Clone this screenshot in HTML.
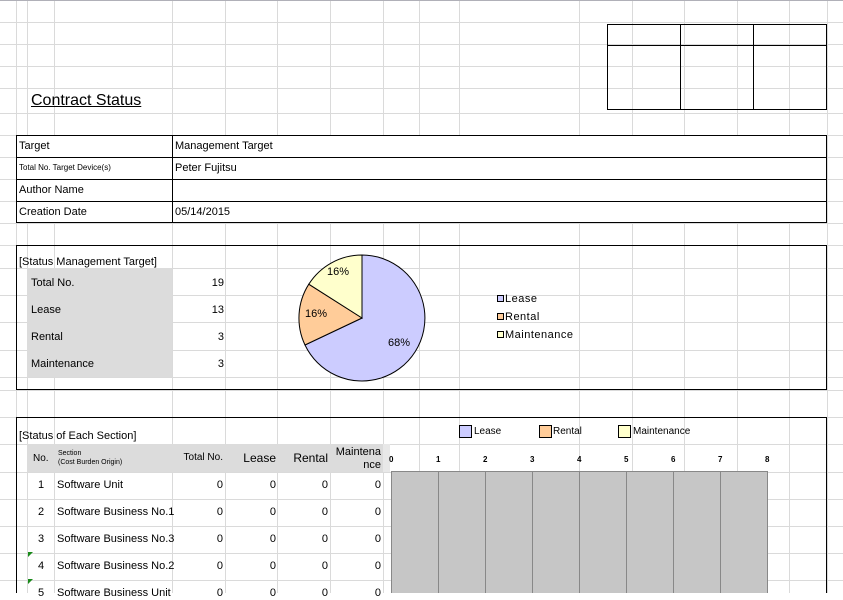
<!DOCTYPE html>
<html><head><meta charset="utf-8"><style>
body{margin:0;width:843px;height:593px;overflow:hidden;background:#fff;font-family:"Liberation Sans",sans-serif;font-size:11px;color:#000;position:relative}
.t{position:absolute;white-space:nowrap;line-height:14px}
.r{text-align:right}
svg{position:absolute;left:0;top:0}
</style></head><body>
<svg width="843" height="593">
<g stroke="#dadada" stroke-width="1">
<line x1="16.5" y1="0" x2="16.5" y2="593"/><line x1="27.5" y1="0" x2="27.5" y2="593"/><line x1="54.5" y1="0" x2="54.5" y2="593"/>
<line x1="172.5" y1="0" x2="172.5" y2="593"/><line x1="225.5" y1="0" x2="225.5" y2="593"/><line x1="277.5" y1="0" x2="277.5" y2="593"/>
<line x1="330.5" y1="0" x2="330.5" y2="593"/><line x1="383.5" y1="0" x2="383.5" y2="593"/><line x1="419.5" y1="0" x2="419.5" y2="593"/>
<line x1="459.5" y1="0" x2="459.5" y2="593"/><line x1="579.5" y1="0" x2="579.5" y2="593"/><line x1="632.5" y1="0" x2="632.5" y2="593"/>
<line x1="684.5" y1="0" x2="684.5" y2="593"/><line x1="737.5" y1="0" x2="737.5" y2="593"/><line x1="789.5" y1="0" x2="789.5" y2="593"/>
<line x1="827.5" y1="0" x2="827.5" y2="593"/>
<line x1="0" y1="22.5" x2="843" y2="22.5"/><line x1="0" y1="44.5" x2="843" y2="44.5"/><line x1="0" y1="66.5" x2="843" y2="66.5"/>
<line x1="0" y1="88.5" x2="843" y2="88.5"/><line x1="0" y1="113.5" x2="843" y2="113.5"/><line x1="0" y1="135.5" x2="843" y2="135.5"/>
<line x1="0" y1="157.5" x2="843" y2="157.5"/><line x1="0" y1="179.5" x2="843" y2="179.5"/><line x1="0" y1="201.5" x2="843" y2="201.5"/>
<line x1="0" y1="223.5" x2="843" y2="223.5"/><line x1="0" y1="245.5" x2="843" y2="245.5"/><line x1="0" y1="268.5" x2="843" y2="268.5"/>
<line x1="0" y1="295.5" x2="843" y2="295.5"/><line x1="0" y1="322.5" x2="843" y2="322.5"/><line x1="0" y1="350.5" x2="843" y2="350.5"/>
<line x1="0" y1="377.5" x2="843" y2="377.5"/><line x1="0" y1="390.5" x2="843" y2="390.5"/><line x1="0" y1="417.5" x2="843" y2="417.5"/>
<line x1="0" y1="444.5" x2="843" y2="444.5"/><line x1="0" y1="472.5" x2="843" y2="472.5"/><line x1="0" y1="499.5" x2="843" y2="499.5"/>
<line x1="0" y1="526.5" x2="843" y2="526.5"/><line x1="0" y1="553.5" x2="843" y2="553.5"/><line x1="0" y1="580.5" x2="843" y2="580.5"/>
</g>
<line x1="0" y1="0.5" x2="843" y2="0.5" stroke="#b0b0b8"/>
<rect x="27" y="268" width="145" height="109" fill="#dcdcdc"/>
<rect x="27" y="444" width="356" height="28" fill="#dcdcdc"/>
<rect x="383" y="444" width="7" height="28" fill="#e8e8e8"/>
<g stroke="#000" stroke-width="1" fill="none">
<rect x="607.5" y="24.5" width="219" height="85"/>
<line x1="607" y1="45.5" x2="827" y2="45.5"/><line x1="680.5" y1="24" x2="680.5" y2="110"/><line x1="753.5" y1="24" x2="753.5" y2="110"/>
<rect x="16.5" y="135.5" width="810" height="87" fill="#fff"/>
<line x1="172.5" y1="135" x2="172.5" y2="223"/>
<line x1="16" y1="157.5" x2="827" y2="157.5"/><line x1="16" y1="179.5" x2="827" y2="179.5"/><line x1="16" y1="201.5" x2="827" y2="201.5"/>
<rect x="16.5" y="245.5" width="810" height="144"/>
<path d="M16.5 600 V417.5 H826.5 V600"/>
</g>
<g stroke="#000" stroke-width="1">
<path d="M362 318 L362 255 A63 63 0 1 1 305 345 Z" fill="#ccccff"/>
<path d="M362 318 L305 345 A63 63 0 0 1 308.8 284.2 Z" fill="#ffcc99"/>
<path d="M362 318 L308.8 284.2 A63 63 0 0 1 362 255 Z" fill="#ffffcc"/>
</g>
<g stroke="#000" stroke-width="1">
<rect x="497.5" y="295.5" width="6" height="6" fill="#ccccff"/>
<rect x="497.5" y="313.5" width="6" height="6" fill="#ffcc99"/>
<rect x="497.5" y="331.5" width="6" height="6" fill="#ffffcc"/>
<rect x="459.5" y="425.5" width="12" height="12" fill="#ccccff"/>
<rect x="539.5" y="425.5" width="12" height="12" fill="#ffcc99"/>
<rect x="618.5" y="425.5" width="12" height="12" fill="#ffffcc"/>
</g>
<rect x="391.5" y="471.5" width="376" height="130" fill="#c6c6c6" stroke="#888"/>
<g stroke="#888"><line x1="438.5" y1="471" x2="438.5" y2="593"/><line x1="485.5" y1="471" x2="485.5" y2="593"/><line x1="532.5" y1="471" x2="532.5" y2="593"/><line x1="579.5" y1="471" x2="579.5" y2="593"/><line x1="626.5" y1="471" x2="626.5" y2="593"/><line x1="673.5" y1="471" x2="673.5" y2="593"/><line x1="720.5" y1="471" x2="720.5" y2="593"/></g>
<path d="M28 552 h5 l-5 5z M28 579 h5 l-5 5z" fill="#1a8a1a"/>
</svg>
<div class="t" style="left:31px;top:92px;font-size:16px;line-height:18px;text-decoration:underline">Contract Status</div>
<div class="t" style="left:19px;top:139px">Target</div>
<div class="t" style="left:175px;top:139px">Management Target</div>
<div class="t" style="left:19px;top:163px;font-size:8px;line-height:10px">Total No. Target Device(s)</div>
<div class="t" style="left:175px;top:161px">Peter Fujitsu</div>
<div class="t" style="left:19px;top:183px">Author Name</div>
<div class="t" style="left:19px;top:205px">Creation Date</div>
<div class="t" style="left:175px;top:205px">05/14/2015</div>
<div class="t" style="left:19px;top:255px">[Status Management Target]</div>
<div class="t" style="left:31px;top:276px">Total No.</div><div class="t r" style="left:180px;width:44px;top:276px">19</div>
<div class="t" style="left:31px;top:303px">Lease</div><div class="t r" style="left:180px;width:44px;top:303px">13</div>
<div class="t" style="left:31px;top:330px">Rental</div><div class="t r" style="left:180px;width:44px;top:330px">3</div>
<div class="t" style="left:31px;top:357px">Maintenance</div><div class="t r" style="left:180px;width:44px;top:357px">3</div>
<div class="t" style="left:327px;top:265px;font-size:11px">16%</div>
<div class="t" style="left:305px;top:307px;font-size:11px">16%</div>
<div class="t" style="left:388px;top:336px;font-size:11px">68%</div>
<div class="t" style="left:505px;top:292px;font-size:11px;letter-spacing:0.5px">Lease</div>
<div class="t" style="left:505px;top:310px;font-size:11px;letter-spacing:0.5px">Rental</div>
<div class="t" style="left:505px;top:328px;font-size:11px;letter-spacing:0.5px">Maintenance</div>
<div class="t" style="left:474px;top:425px;font-size:10px">Lease</div>
<div class="t" style="left:553px;top:425px;font-size:10px">Rental</div>
<div class="t" style="left:633px;top:425px;font-size:10px">Maintenance</div>
<div class="t" style="left:19px;top:429px">[Status of Each Section]</div>
<div class="t" style="left:33px;top:452px;font-size:10px">No.</div>
<div class="t" style="left:58px;top:449px;font-size:7px;line-height:9px">Section<br>(Cost Burden Origin)</div>
<div class="t r" style="left:175px;width:48px;top:451px;font-size:10px">Total No.</div>
<div class="t r" style="left:228px;width:48px;top:451px;font-size:12px">Lease</div>
<div class="t r" style="left:280px;width:48px;top:451px;font-size:12px">Rental</div>
<div class="t r" style="left:333px;width:48px;top:446px;font-size:11px;line-height:13px">Maintena<br>nce</div>
<div class="t" style="left:389px;top:453px;font-size:8px;font-weight:bold">0</div>
<div class="t" style="left:436px;top:453px;font-size:8px;font-weight:bold">1</div>
<div class="t" style="left:483px;top:453px;font-size:8px;font-weight:bold">2</div>
<div class="t" style="left:530px;top:453px;font-size:8px;font-weight:bold">3</div>
<div class="t" style="left:577px;top:453px;font-size:8px;font-weight:bold">4</div>
<div class="t" style="left:624px;top:453px;font-size:8px;font-weight:bold">5</div>
<div class="t" style="left:671px;top:453px;font-size:8px;font-weight:bold">6</div>
<div class="t" style="left:718px;top:453px;font-size:8px;font-weight:bold">7</div>
<div class="t" style="left:765px;top:453px;font-size:8px;font-weight:bold">8</div>
<div class="t" style="left:38px;top:478px">1</div><div class="t" style="left:57px;top:478px">Software Unit</div>
<div class="t" style="left:38px;top:505px">2</div><div class="t" style="left:57px;top:505px">Software Business No.1</div>
<div class="t" style="left:38px;top:532px">3</div><div class="t" style="left:57px;top:532px">Software Business No.3</div>
<div class="t" style="left:38px;top:559px">4</div><div class="t" style="left:57px;top:559px">Software Business No.2</div>
<div class="t" style="left:38px;top:586px">5</div><div class="t" style="left:57px;top:586px">Software Business Unit</div>
<div class="t r" style="left:175px;width:48px;top:478px">0</div><div class="t r" style="left:228px;width:48px;top:478px">0</div><div class="t r" style="left:280px;width:48px;top:478px">0</div><div class="t r" style="left:333px;width:48px;top:478px">0</div>
<div class="t r" style="left:175px;width:48px;top:505px">0</div><div class="t r" style="left:228px;width:48px;top:505px">0</div><div class="t r" style="left:280px;width:48px;top:505px">0</div><div class="t r" style="left:333px;width:48px;top:505px">0</div>
<div class="t r" style="left:175px;width:48px;top:532px">0</div><div class="t r" style="left:228px;width:48px;top:532px">0</div><div class="t r" style="left:280px;width:48px;top:532px">0</div><div class="t r" style="left:333px;width:48px;top:532px">0</div>
<div class="t r" style="left:175px;width:48px;top:559px">0</div><div class="t r" style="left:228px;width:48px;top:559px">0</div><div class="t r" style="left:280px;width:48px;top:559px">0</div><div class="t r" style="left:333px;width:48px;top:559px">0</div>
<div class="t r" style="left:175px;width:48px;top:586px">0</div><div class="t r" style="left:228px;width:48px;top:586px">0</div><div class="t r" style="left:280px;width:48px;top:586px">0</div><div class="t r" style="left:333px;width:48px;top:586px">0</div>
</body></html>
